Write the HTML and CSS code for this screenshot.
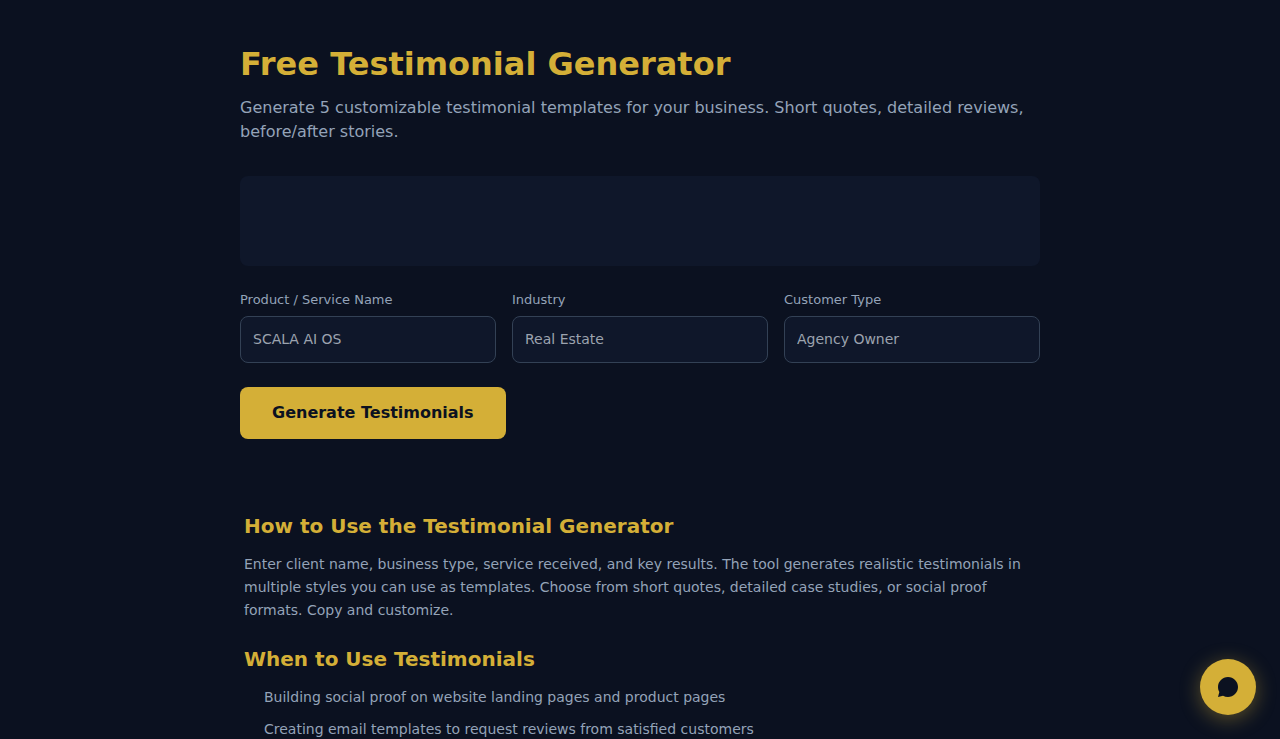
FILE: index.html
```html
<!DOCTYPE html>
<html lang="en">
<head>
    <meta charset="UTF-8">
    <meta name="viewport" content="width=device-width, initial-scale=1.0">
    <title>Free Testimonial Generator</title>
    <link rel="stylesheet" href="styles.css">
</head>
<body>

<main class="container">
    <h1>Free Testimonial Generator</h1>
    <p class="subtitle">Generate 5 customizable testimonial templates for your business. Short quotes, detailed reviews, before/after stories.</p>

    <div class="banner"></div>

    <form class="form" onsubmit="return false">
        <div class="fields">
            <div class="field">
                <label for="product">Product / Service Name</label>
                <input type="text" id="product" placeholder="SCALA AI OS">
            </div>
            <div class="field">
                <label for="industry">Industry</label>
                <input type="text" id="industry" placeholder="Real Estate">
            </div>
            <div class="field">
                <label for="customer">Customer Type</label>
                <input type="text" id="customer" placeholder="Agency Owner">
            </div>
        </div>
        <button class="btn" type="submit">Generate Testimonials</button>
    </form>
</main>

<section class="info">
    <h2>How to Use the Testimonial Generator</h2>
    <p>Enter client name, business type, service received, and key results. The tool generates realistic testimonials in multiple styles you can use as templates. Choose from short quotes, detailed case studies, or social proof formats. Copy and customize.</p>

    <h2>When to Use Testimonials</h2>
    <ul>
        <li>Building social proof on website landing pages and product pages</li>
        <li>Creating email templates to request reviews from satisfied customers</li>
    </ul>
</section>

<button class="chat-btn" type="button" aria-label="Chat">
    <svg width="24" height="24" viewBox="0 0 24 24" fill="currentColor" aria-hidden="true">
        <path d="M12 2C6.480 2 2 6.480 2 12c0 1.820.490 3.530 1.340 5L2 22l5-1.340A9.960 9.960 0 0 0 12 22c5.520 0 10-4.480 10-10S17.520 2 12 2z"/>
    </svg>
</button>

</body>
</html>
```

FILE: styles.css
```css
* {
    margin: 0;
    padding: 0;
    box-sizing: border-box;
}
body {
    background-color: #0b1120;
    color: #94a3b8;
    font-family: 'DejaVu Sans', sans-serif;
    font-size: 16px;
    line-height: 24px;
}
.container {
    max-width: 832px;
    margin: 0 auto;
    padding: 40px 16px 48px;
}
h1 {
    color: #d4af37;
    font-size: 32px;
    line-height: 48px;
    margin-bottom: 8px;
}
.subtitle {
    margin-bottom: 32px;
}
.banner {
    background-color: #0f172a;
    border-radius: 8px;
    min-height: 90px;
    margin-bottom: 24px;
}
.fields {
    display: grid;
    grid-template-columns: repeat(3, 1fr);
    gap: 16px;
    margin-bottom: 24px;
}
.field label {
    display: block;
    font-size: 13px;
    line-height: 20px;
    margin-bottom: 6px;
}
.field input {
    display: block;
    width: 100%;
    background-color: #0f172a;
    color: #e2e8f0;
    border: 1px solid #334155;
    border-radius: 8px;
    padding: 14px 12px 15px;
    font-family: inherit;
    font-size: 14px;
}
.field input::placeholder {
    color: #9ca3af;
}
.btn {
    display: block;
    background-color: #d4af37;
    color: #0b1120;
    border: none;
    border-radius: 8px;
    padding: 14px 32px;
    font-family: inherit;
    font-size: 16px;
    font-weight: 700;
    line-height: 24px;
    cursor: pointer;
}
.info {
    max-width: 832px;
    margin: 0 auto;
    padding: 24px 20px;
    font-size: 14px;
    line-height: 23px;
}
.info h2 {
    color: #d4af37;
    font-size: 20px;
    line-height: 30px;
    margin-bottom: 12px;
}
.info p {
    margin-bottom: 22px;
}
.info ul {
    list-style: none;
    padding-left: 20px;
}
.info li {
    margin-bottom: 9px;
}
.chat-btn {
    position: fixed;
    right: 24px;
    bottom: 24px;
    width: 56px;
    height: 56px;
    display: flex;
    align-items: center;
    justify-content: center;
    background-color: #d4af37;
    color: #0b1120;
    border: none;
    border-radius: 50%;
    box-shadow: 0 4px 20px rgba(212, 175, 55, 0.4);
    cursor: pointer;
}
@media (max-width: 640px) {
    .fields {
        grid-template-columns: 1fr;
    }
}
```
